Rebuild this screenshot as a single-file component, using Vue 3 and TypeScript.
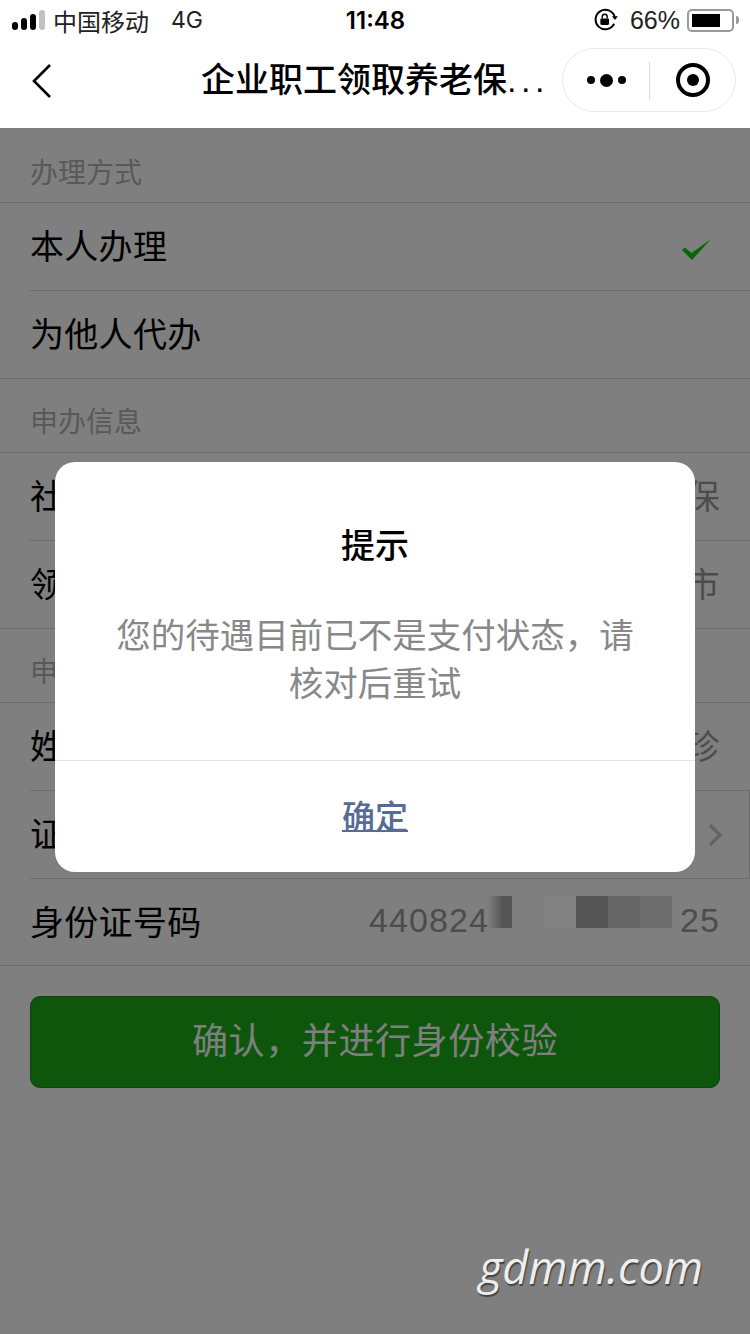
<script setup lang="ts">
type Row = { label: string; value?: string; tail?: string; check?: boolean; arrow?: boolean }

const sections: { title: string; rows: Row[] }[] = [
  { title: '办理方式', rows: [{ label: '本人办理', check: true }, { label: '为他人代办' }] },
  { title: '申办信息', rows: [{ label: '社保', value: '保' }, { label: '领取', value: '市' }] },
  {
    title: '申请人',
    rows: [
      { label: '姓名', value: '珍' },
      { label: '证件类型', arrow: true },
      { label: '身份证号码', value: '440824', tail: '25' },
    ],
  },
]
</script>

<template>
  <div class="page">
    <div class="top">
      <div class="status">
        <div class="left">
          <span class="signal"><i></i><i></i><i></i><i class="off"></i></span>
          <span>中国移动</span>
          <span class="net">4G</span>
        </div>
        <div class="time">11:48</div>
        <div class="right">
          <svg width="26" height="24" viewBox="0 0 24 22" fill="none">
            <path d="M19.5 14.5A9 9 0 1 1 20 8" stroke="#000" stroke-width="1.8" />
            <path d="M17.5 7.5h5.5l-2.7 3.6z" fill="#000" />
            <rect x="6.8" y="9.5" width="8" height="6" rx="1" fill="#000" />
            <path d="M8.5 9.5V8a2.3 2.3 0 0 1 4.6 0v1.5" stroke="#000" stroke-width="1.3" />
          </svg>
          <span class="pct">66%</span>
          <span class="battery"><b></b></span>
          <span class="nub"></span>
        </div>
      </div>
      <div class="nav">
        <svg class="back" width="22" height="36" viewBox="0 0 22 36" fill="none">
          <path d="M19 2 3 18l16 16" stroke="#000" stroke-width="2.6" />
        </svg>
        <div class="title">企业职工领取养老保<span class="more">...</span></div>
        <div class="capsule">
          <div class="dots"><i></i><i class="big"></i><i></i></div>
          <div class="divider"></div>
          <div class="target"><i></i></div>
        </div>
      </div>
    </div>

    <div class="body">
      <section v-for="s in sections" :key="s.title">
        <div class="section-title">{{ s.title }}</div>
        <div class="rows">
          <div v-for="r in s.rows" :key="r.label" class="row" :class="{ 'has-arrow': r.arrow }">
            <span class="label">{{ r.label }}</span>
            <span v-if="r.tail" class="value id-no"><span>{{ r.value }}</span><span>{{ r.tail }}</span></span>
            <span v-else-if="r.value" class="value">{{ r.value }}</span>
            <svg v-if="r.check" class="check" width="30" height="22" viewBox="0 0 30 22">
              <path d="M0 11 3 8.500 9.500 14 29 0 10 21z" fill="#0ad00a" />
            </svg>
            <svg v-if="r.arrow" class="arrow" width="14" height="24" viewBox="0 0 14 24" fill="none">
              <path d="M2 2 12 12 2 22" stroke="#c8c8c8" stroke-width="3.4" />
            </svg>
          </div>
        </div>
      </section>
      <button class="submit">确认，并进行身份校验</button>
    </div>

    <div class="mask"></div>

    <div class="blur b1"></div>
    <div class="blur b2"></div>
    <div class="blur b3"></div>
    <div class="blur b4"></div>
    <div class="blur b5"></div>

    <div class="dialog">
      <div class="dialog-title">提示</div>
      <div class="dialog-text">您的待遇目前已不是支付状态，请核对后重试</div>
      <div class="dialog-btn">确定</div>
    </div>
    <div class="mark">gdmm.com</div>
  </div>
</template>

<style>
body {
  margin: 0;
}
</style>

<style scoped>
.page {
  position: relative;
  width: 750px;
  height: 1334px;
  overflow: hidden;
  background: #fff;
  font-family: "Liberation Sans", "Noto Sans CJK SC", sans-serif;
}

.top {
  height: 128px;
}

.status {
  height: 40px;
  display: flex;
  align-items: center;
  justify-content: space-between;
  padding: 0 11px 0 12px;
  font-size: 24px;
  color: #222;
}

.left,
.right {
  width: 290px;
  display: flex;
  align-items: center;
}

.right {
  justify-content: flex-end;
}

.signal {
  display: flex;
  align-items: flex-end;
  gap: 3px;
  margin-right: 8px;
}

.signal i {
  width: 6px;
  border-radius: 3px;
  background: #000;
  height: 8px;
}

.signal i:nth-child(2) {
  height: 12px;
}

.signal i:nth-child(3) {
  height: 16px;
}

.signal i.off {
  height: 20px;
  background: #c2c2c2;
}

.net {
  margin-left: 22px;
  font-family: Inter, sans-serif;
  font-size: 23px;
}

.time {
  font-family: Inter, sans-serif;
  font-size: 24px;
  font-weight: 600;
  color: #000;
}

.pct {
  margin-left: 11px;
  font-size: 25px;
}

.battery {
  box-sizing: border-box;
  width: 47px;
  height: 23px;
  margin-left: 7px;
  padding: 3px;
  border: 2px solid #9a9a9a;
  border-radius: 5px;
  display: block;
}

.battery b {
  display: block;
  width: 28px;
  height: 13px;
  background: #000;
}

.nub {
  width: 3px;
  height: 8px;
  margin-left: 2px;
  background: #9a9a9a;
  border-radius: 0 3px 3px 0;
}

.nav {
  position: relative;
  height: 88px;
  box-sizing: border-box;
  padding-bottom: 14px;
  display: flex;
  align-items: center;
  justify-content: center;
}

.back {
  position: absolute;
  left: 31px;
  top: 23px;
}

.title {
  width: 370px;
  font-size: 34px;
  font-weight: 500;
  color: #000;
  text-align: center;
  white-space: nowrap;
}

.more {
  letter-spacing: 4.5px;
}

.capsule {
  position: absolute;
  right: 14px;
  top: 8px;
  box-sizing: border-box;
  width: 174px;
  height: 64px;
  border: 1px solid #e9e9e9;
  border-radius: 32px;
  display: flex;
  align-items: center;
}

.dots {
  width: 86px;
  display: flex;
  align-items: center;
  justify-content: center;
  gap: 5px;
}

.dots i {
  width: 8px;
  height: 8px;
  border-radius: 50%;
  background: #000;
}

.dots i.big {
  width: 13px;
  height: 13px;
}

.divider {
  width: 1px;
  height: 37px;
  background: #d9d9d9;
}

.target {
  flex: 1;
  display: flex;
  justify-content: center;
}

.target i {
  box-sizing: border-box;
  width: 34px;
  height: 34px;
  border: 4px solid #000;
  border-radius: 50%;
  display: flex;
  align-items: center;
  justify-content: center;
}

.target i::after {
  content: "";
  width: 12px;
  height: 12px;
  border-radius: 50%;
  background: #000;
}

.section-title {
  height: 73px;
  box-sizing: border-box;
  padding: 27px 0 0 30px;
  font-size: 28px;
  line-height: 34px;
  color: #b2b2b2;
}

section:first-child .section-title {
  height: 74px;
  padding-top: 29px;
}

.rows {
  border-top: 1px solid #d9d9d9;
  border-bottom: 1px solid #d9d9d9;
}

.row {
  height: 87px;
  margin-left: 30px;
  padding-right: 30px;
  display: flex;
  align-items: center;
  justify-content: space-between;
  font-size: 34px;
  letter-spacing: 0.3px;
  color: #000;
}

.row + .row {
  border-top: 1px solid #d9d9d9;
}

section:last-of-type .row:last-child {
  height: 86px;
}

.row.has-arrow {
  padding-right: 29px;
  border-right: 1px solid #d9d9d9;
}

.label,
.value {
  margin-bottom: 4px;
}

.value {
  margin-left: auto;
  color: #999;
}

.id-no {
  width: 351px;
  display: flex;
  justify-content: space-between;
  letter-spacing: 1.1px;
}

.check {
  margin: 6px 8px 0 0;
}

.arrow {
  margin-right: -2px;
}

.submit {
  display: block;
  width: 690px;
  height: 92px;
  margin: 30px 0 0 30px;
  padding-bottom: 10px;
  border: 1px solid #158a15;
  border-radius: 10px;
  background: #1aad19;
  color: #fff;
  font: 36px "Liberation Sans", "Noto Sans CJK SC", sans-serif;
  letter-spacing: 0.6px;
}

.mask {
  position: absolute;
  inset: 128px 0 0;
  background: rgba(0, 0, 0, 0.5);
}

.blur {
  position: absolute;
  top: 896px;
  width: 32px;
  height: 32px;
}

.b1 {
  left: 488px;
  width: 24px;
  background: linear-gradient(to right, rgba(85, 85, 85, 0), #555 60%);
}

.b2 {
  left: 544px;
  background: #828282;
}

.b3 {
  left: 576px;
  background: #555;
}

.b4 {
  left: 608px;
  background: #666;
}

.b5 {
  left: 640px;
  background: #6e6e6e;
}

.dialog {
  position: absolute;
  left: 55px;
  top: 462px;
  width: 640px;
  height: 410px;
  background: #fff;
  border-radius: 20px;
  display: flex;
  flex-direction: column;
  text-align: center;
}

.dialog-title {
  padding-top: 62px;
  font-size: 34px;
  line-height: 44px;
  font-weight: 500;
  color: #000;
}

.dialog-text {
  box-sizing: border-box;
  height: 193px;
  padding: 44px 60px 0;
  font-size: 34.5px;
  line-height: 48px;
  color: #888;
  border-bottom: 1px solid #e5e5e5;
}

.dialog-btn {
  flex: 1;
  padding-bottom: 4px;
  display: flex;
  align-items: center;
  justify-content: center;
  font-size: 33px;
  font-weight: 500;
  color: #576b95;
  text-decoration: underline;
  text-decoration-thickness: 2px;
  text-underline-offset: 1px;
}

.mark {
  position: absolute;
  right: 47px;
  top: 1236px;
  font-family: "Open Sans", sans-serif;
  font-style: italic;
  font-size: 45px;
  color: #eee;
  text-shadow: 1px 2px 1px #444;
}
</style>
